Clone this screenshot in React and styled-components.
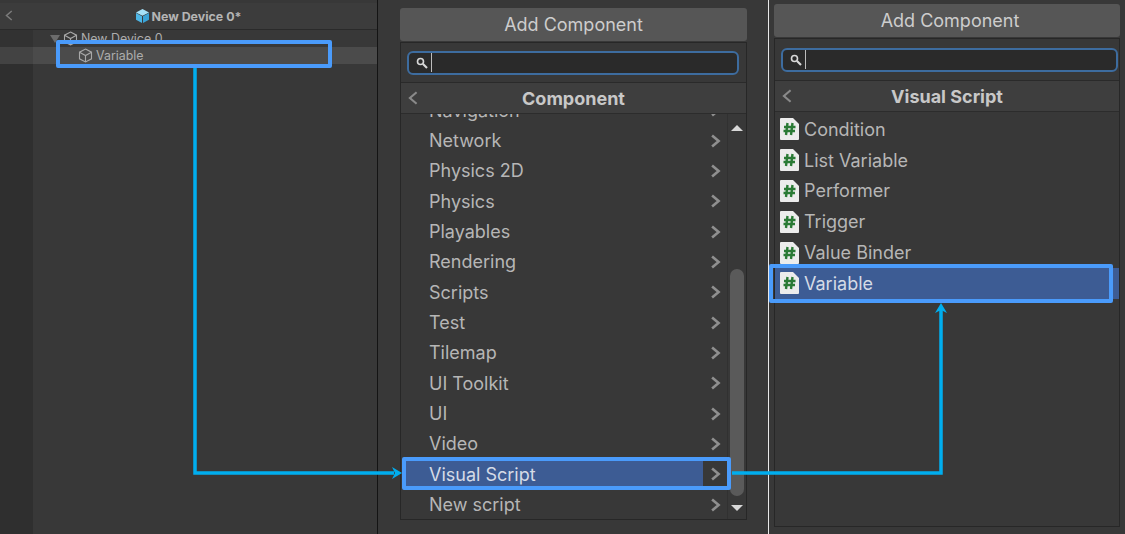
import React from "react";
import styled, { createGlobalStyle } from "styled-components";

const GlobalStyle = createGlobalStyle`
  html, body {
    margin: 0;
    padding: 0;
    background: #383838;
  }
  * {
    box-sizing: border-box;
  }
`;

const Page = styled.div`
  position: relative;
  display: flex;
  width: 1125px;
  height: 534px;
  overflow: hidden;
  background: #383838;
  font-family: Inter, "Liberation Sans", sans-serif;
`;

/* hierarchy panel */
const Hierarchy = styled.div`
  flex: 0 0 378px;
  display: flex;
  flex-direction: column;
  padding-top: 3px;
  background: #383838;
  border-right: 1px solid #141414;
`;
const HierarchyBar = styled.div`
  position: relative;
  flex: 0 0 27px;
  display: flex;
  align-items: center;
  justify-content: center;
  gap: 2px;
  padding-right: 1px;
  background: #3c3c3c;
  border-bottom: 1px solid #2a2a2a;
  color: #b4b4b4;
  font-size: 12.4px;
  font-weight: 700;
`;
const BarBack = styled.div`
  position: absolute;
  left: 5px;
  top: 7px;
  display: flex;
`;
const TreeRow = styled.div`
  position: relative;
  display: flex;
  align-items: center;
  height: 17px;
  gap: 3px;
  padding-left: ${(p) => p.$indent}px;
  color: #adadad;
  font-size: 12.4px;
  background: ${(p) =>
    p.$selected
      ? "linear-gradient(90deg, #434343 0, #434343 33px, #4b4b4b 33px)"
      : "linear-gradient(90deg, #323232 0, #323232 33px, #383838 33px)"};
`;
const Fold = styled.span`
  width: 0;
  height: 0;
  border-left: 5px solid transparent;
  border-right: 5px solid transparent;
  border-top: 8px solid #6c6c6c;
`;
const TreeRest = styled.div`
  flex: 1;
  background: linear-gradient(90deg, #2f2f2f 0, #2f2f2f 33px, #383838 33px);
`;
const Callout = styled.span`
  position: absolute;
  top: ${(p) => p.$top}px;
  bottom: ${(p) => p.$bottom}px;
  left: ${(p) => p.$left}px;
  right: ${(p) => p.$right}px;
  border: 4px solid #4a9bfb;
  border-radius: 2px;
  pointer-events: none;
`;

/* add component popup */
const Column = styled.div`
  flex: ${(p) => p.$basis};
  display: flex;
  flex-direction: column;
  padding: ${(p) => p.$pad};
  border-right: ${(p) => (p.$divider ? "1px solid #e8e8e8" : "none")};
`;
const AddButton = styled.div`
  display: flex;
  align-items: center;
  justify-content: center;
  height: 33px;
  flex: none;
  margin-bottom: 1px;
  padding-left: ${(p) => p.$nudge || 0}px;
  background: #565656;
  border-radius: 3px;
  color: #cdcdcd;
  font-size: 18px;
`;
const Popup = styled.div`
  flex: 1;
  display: flex;
  flex-direction: column;
  min-height: 0;
  background: #383838;
  border: 1px solid #272727;
`;
const SearchRow = styled.div`
  flex: 0 0 ${(p) => p.$height}px;
  display: flex;
  align-items: center;
  padding: 0 ${(p) => p.$trim}px 0 6px;
  border-bottom: 1px solid #2a2a2a;
`;
const SearchInput = styled.div`
  flex: 1;
  display: flex;
  align-items: center;
  height: 24px;
  padding-left: 7px;
  gap: 3px;
  background: #2a2a2a;
  border: 2px solid #3d6c9f;
  border-radius: 6px;
`;
const Caret = styled.span`
  width: 1px;
  height: 19px;
  background: #bdbdbd;
`;
const PopupTitle = styled.div`
  position: relative;
  flex: 0 0 31px;
  display: flex;
  align-items: center;
  justify-content: center;
  background: #3e3e3e;
  border-bottom: 1px solid #2c2c2c;
  color: #c8c8c8;
  font-size: 18px;
  font-weight: 700;
`;
const TitleBack = styled.div`
  position: absolute;
  left: ${(p) => p.$left}px;
  top: 8px;
  display: flex;
`;
const PopupBody = styled.div`
  flex: 1;
  display: flex;
  min-height: 0;
`;
/* clips the scrolled rows top and bottom only, the callout may stick out sideways */
const RowScroller = styled.div`
  flex: 1;
  clip-path: inset(0 -12px 0 -12px);
`;
const RowStack = styled.div`
  margin-top: -19px;
`;
const MenuRow = styled.div`
  position: relative;
  display: flex;
  align-items: center;
  justify-content: space-between;
  height: 30.35px;
  padding: 0 6px 0 28px;
  color: ${(p) => (p.$active ? "#d5dbe6" : "#b6b6b6")};
  font-size: 18px;
`;
const ActiveFill = styled.span`
  position: absolute;
  z-index: 0;
  inset: 0 24px 0 2px;
  background: #3d5c94;
`;
const RowText = styled.span`
  position: relative;
  z-index: 1;
`;
const RowChevron = styled.span`
  position: relative;
  z-index: 1;
  display: flex;
`;
const ScrollBar = styled.div`
  flex: 0 0 19px;
  display: flex;
  flex-direction: column;
  align-items: center;
  padding: 11px 0 8px;
  border-left: 1px solid #313131;
`;
const ArrowUp = styled.span`
  width: 0;
  height: 0;
  border-left: 6px solid transparent;
  border-right: 6px solid transparent;
  border-bottom: 6px solid #d8d8d8;
`;
const ArrowDown = styled.span`
  width: 0;
  height: 0;
  border-left: 6px solid transparent;
  border-right: 6px solid transparent;
  border-top: 6px solid #d8d8d8;
`;
const Track = styled.div`
  flex: 1;
  width: 14px;
  display: flex;
  flex-direction: column;
  justify-content: flex-end;
  padding-bottom: 9px;
`;
const Thumb = styled.div`
  height: 227px;
  border-radius: 7px;
  background: #5a5a5a;
`;
const ScriptRow = styled.div`
  position: relative;
  display: flex;
  align-items: center;
  gap: 5px;
  height: 30.8px;
  padding-left: 5px;
  color: ${(p) => (p.$active ? "#d5dbe6" : "#b6b6b6")};
  background: ${(p) => (p.$active ? "#3d5c94" : "transparent")};
  font-size: 18px;
`;
const ScriptList = styled.div`
  padding-top: 2px;
`;

const Connectors = styled.svg`
  position: absolute;
  left: 0;
  top: 0;
  pointer-events: none;
`;

const Chevron = ({ size = 14, color = "#8f8f8f", weight = 2.6 }) => (
  <svg width={size * 0.8} height={size} viewBox="0 0 11 14">
    <polyline points="2,1.5 8.5,7 2,12.5" fill="none" stroke={color} strokeWidth={weight} />
  </svg>
);

const BackArrow = ({ height = 14, color = "#8a8a8a", weight = 2.2 }) => (
  <svg width={height * 0.75} height={height} viewBox="0 0 11 14">
    <polyline points="9,1 2,7 9,13" fill="none" stroke={color} strokeWidth={weight} />
  </svg>
);

const Cube = ({ color = "#a8a8a8" }) => (
  <svg width="15" height="15" viewBox="0 0 15 15" fill="none" stroke={color} strokeWidth="1.1">
    <path d="M7.5 1 L13.5 4.2 V10.8 L7.5 14 L1.5 10.8 V4.2 Z" />
    <path d="M1.5 4.2 L7.5 7.5 L13.5 4.2 M7.5 7.5 V14" />
  </svg>
);

const BlueCube = () => (
  <svg width="15" height="16" viewBox="0 0 15 16">
    <path d="M7.5 1 L14 4.4 L7.5 7.8 L1 4.4 Z" fill="#a5e0f7" />
    <path d="M1 4.9 L7 8.2 V15 L1 11.7 Z" fill="#4db6e6" />
    <path d="M14 4.9 L8 8.2 V15 L14 11.7 Z" fill="#3aa3d6" />
  </svg>
);

const Magnifier = () => (
  <svg width="12" height="12" viewBox="0 0 12 12" fill="none" stroke="#d8d8d8">
    <circle cx="4.5" cy="4.5" r="3" strokeWidth="1.6" />
    <path d="M7 7 L11 11" strokeWidth="2.2" />
  </svg>
);

const ScriptIcon = () => (
  <svg width="19" height="22" viewBox="0 0 19 22" style={{ flex: "none" }}>
    <path d="M1 0 H13 L19 6 V21 Q19 22 18 22 H1 Q0 22 0 21 V1 Q0 0 1 0 Z" fill="#ececec" />
    <path
      d="M7.5 5 L6 17 M12.5 5 L11 17 M4 9 H15.5 M3.5 13 H15"
      fill="none"
      stroke="#2a7a35"
      strokeWidth="2.4"
    />
  </svg>
);

const menuItems = [
  "Navigation",
  "Network",
  "Physics 2D",
  "Physics",
  "Playables",
  "Rendering",
  "Scripts",
  "Test",
  "Tilemap",
  "UI Toolkit",
  "UI",
  "Video",
  "Visual Script",
  "New script",
];

const scriptItems = ["Condition", "List Variable", "Performer", "Trigger", "Value Binder", "Variable"];

export default function App() {
  return (
    <Page>
      <GlobalStyle />
      <Hierarchy>
        <HierarchyBar>
          <BarBack>
            <BackArrow height={11} color="#7c7c7c" weight={2} />
          </BarBack>
          <BlueCube />
          New Device 0*
        </HierarchyBar>
        <TreeRow $indent={50}>
          <Fold />
          <Cube />
          New Device 0
        </TreeRow>
        <TreeRow $indent={78} $selected>
          <Cube />
          Variable
          <Callout $top={-7} $bottom={-4} $left={56} $right={45} />
        </TreeRow>
        <TreeRest />
      </Hierarchy>

      <Column $basis="0 0 391px" $pad="8px 21px 14px 22px" $divider>
        <AddButton>Add Component</AddButton>
        <Popup>
          <SearchRow $height={40} $trim={7}>
            <SearchInput>
              <Magnifier />
              <Caret />
            </SearchInput>
          </SearchRow>
          <PopupTitle>
            <TitleBack $left={7}>
              <BackArrow />
            </TitleBack>
            Component
          </PopupTitle>
          <PopupBody>
            <RowScroller>
              <RowStack>
                {menuItems.map((item) => {
                  const active = item === "Visual Script";
                  return (
                    <MenuRow key={item} $active={active}>
                      {active && <ActiveFill />}
                      <RowText>{item}</RowText>
                      <RowChevron>
                        <Chevron />
                      </RowChevron>
                      {active && <Callout $top={-2} $bottom={-1} $left={1} $right={-4} />}
                    </MenuRow>
                  );
                })}
              </RowStack>
            </RowScroller>
            <ScrollBar>
              <ArrowUp />
              <Track>
                <Thumb />
              </Track>
              <ArrowDown />
            </ScrollBar>
          </PopupBody>
        </Popup>
      </Column>

      <Column $basis="1" $pad="4px 5px 7px 5px">
        <AddButton $nudge={6}>Add Component</AddButton>
        <Popup>
          <SearchRow $height={42} $trim={1}>
            <SearchInput>
              <Magnifier />
              <Caret />
            </SearchInput>
          </SearchRow>
          <PopupTitle>
            <TitleBack $left={7}>
              <BackArrow />
            </TitleBack>
            Visual Script
          </PopupTitle>
          <ScriptList>
            {scriptItems.map((item) => {
              const active = item === "Variable";
              return (
                <ScriptRow key={item} $active={active}>
                  <ScriptIcon />
                  {item}
                  {active && <Callout $top={-4} $bottom={-4} $left={-6} $right={6} />}
                </ScriptRow>
              );
            })}
          </ScriptList>
        </Popup>
      </Column>

      <Connectors width="1125" height="534" viewBox="0 0 1125 534">
        <g fill="none" stroke="#00aeef" strokeWidth="3.5">
          <path d="M195 68 V473 H394" />
          <path d="M732 473 H941 V310" />
        </g>
        <path d="M402 473 L392 467 L395 473 L392 479 Z" fill="#00aeef" />
        <path d="M941 303 L935 313 L941 310 L947 313 Z" fill="#00aeef" />
      </Connectors>
    </Page>
  );
}
